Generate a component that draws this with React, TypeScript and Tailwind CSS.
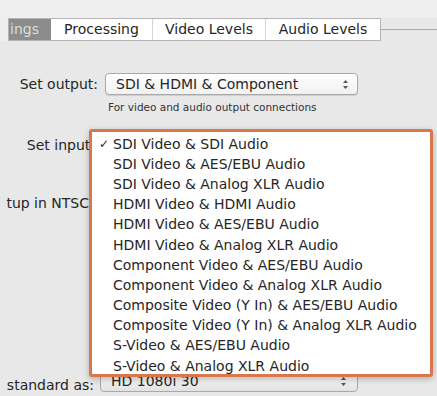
import React from "react";

const inputs = [
  "SDI Video & SDI Audio",
  "SDI Video & AES/EBU Audio",
  "SDI Video & Analog XLR Audio",
  "HDMI Video & HDMI Audio",
  "HDMI Video & AES/EBU Audio",
  "HDMI Video & Analog XLR Audio",
  "Component Video & AES/EBU Audio",
  "Component Video & Analog XLR Audio",
  "Composite Video (Y In) & AES/EBU Audio",
  "Composite Video (Y In) & Analog XLR Audio",
  "S-Video & AES/EBU Audio",
  "S-Video & Analog XLR Audio",
];

function Arrows() {
  return (
    <svg width="7" height="11" viewBox="0 0 7 11" className="text-[#555]">
      <path d="M3.5 1 L6 4 H1 Z" fill="currentColor" />
      <path d="M3.5 10 L6 7 H1 Z" fill="currentColor" />
    </svg>
  );
}

export default function App() {
  return (
    <div
      className="relative w-[437px] h-[396px] overflow-hidden bg-[#e8e8e8] text-[#262626]"
      style={{ fontFamily: '"DejaVu Sans", "Noto Sans", sans-serif' }}
    >
      {/* top strip */}
      <div className="h-[18px] bg-[#efefef]" />

      {/* Tabs */}
      <div className="flex items-center h-[23px]">
        <div className="w-[8px] h-full bg-[#eeeeee]" />
        <div className="flex h-full border border-[#b4b4b4] bg-white text-[14px]">
          <div className="w-[42px] h-full bg-[#8c8c8c] text-[#dcdcdc] flex items-center pl-[1px]">
            ings
          </div>
          <div className="w-[102px] flex items-center justify-center border-r border-[#d4d4d4]">
            Processing
          </div>
          <div className="w-[113px] flex items-center justify-center border-r border-[#d4d4d4]">
            Video Levels
          </div>
          <div className="w-[114px] flex items-center justify-center">
            Audio Levels
          </div>
        </div>
        <div className="flex-1 h-px bg-[#a8a8a8]" />
      </div>

      {/* Set output */}
      <div className="flex items-center mt-[32px] h-[22px]">
        <div className="w-[98px] text-right text-[14px]">Set output:</div>
        <div className="ml-[7px] w-[253px] h-[22px] rounded-[4px] border border-[#a9a9a9] bg-gradient-to-b from-white to-[#f1f1f1] flex items-center justify-between pl-[10px] pr-[8px] text-[14px] shadow-[0_1px_1px_rgba(0,0,0,0.12)]">
          <span>SDI &amp; HDMI &amp; Component</span>
          <Arrows />
        </div>
      </div>
      <div className="pl-[108px] mt-[5px] text-[10.5px] text-[#333]">
        For video and audio output connections
      </div>

      {/* Set input */}
      <div className="mt-[20px] h-[20px] flex items-center">
        <div className="w-[95px] text-right text-[14px] whitespace-nowrap">Set input:</div>
      </div>

      {/* Setup in NTSC */}
      <div className="mt-[38px] h-[20px] flex items-center">
        <div className="w-[89px] text-right text-[14px] whitespace-nowrap">tup in NTSC</div>
      </div>

      {/* standard as */}
      <div className="mt-[162px] flex items-center h-[20px]">
        <div className="w-[94px] text-right text-[14px] whitespace-nowrap">standard as:</div>
        <div className="ml-[6px] w-[258px] h-[22px] mt-[-9px] rounded-[4px] border border-[#a9a9a9] bg-gradient-to-b from-white to-[#e2e2e2] flex items-center justify-between pl-[10px] pr-[10px] text-[14px]">
          <span>HD 1080i 30</span>
          <Arrows />
        </div>
      </div>

      {/* Input popup menu */}
      <div className="absolute left-[89px] top-[129px] w-[344px] h-[248px] rounded-[3px] border-[3px] border-[#d8774b] bg-white shadow-[0_2px_6px_rgba(0,0,0,0.25)] pt-[2px]">
        {inputs.map((item, i) => (
          <div key={item} className="h-[20.2px] flex items-center text-[14px] text-[#262626] whitespace-nowrap">
            <span className="w-[21px] pl-[7px] text-[12px] font-bold">{i === 0 ? "✓" : ""}</span>
            <span>{item}</span>
          </div>
        ))}
      </div>
    </div>
  );
}
